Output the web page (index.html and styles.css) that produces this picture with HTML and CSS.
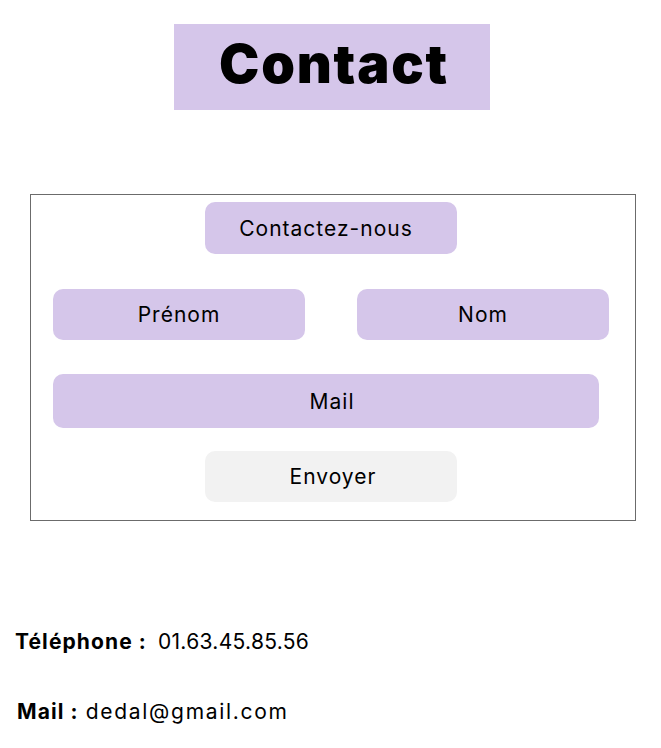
FILE: index.html
```html
<!DOCTYPE html>
<html lang="fr">
<head>
<meta charset="utf-8">
<title>Contact</title>
<link rel="stylesheet" href="styles.css">
</head>
<body>
<header class="title-wrap">
  <h1 class="title">Contact</h1>
</header>
<form class="form-box">
  <div class="row row-head"><div class="pill pill-head">Contactez-nous</div></div>
  <div class="row row-names">
    <div class="pill pill-half">Prénom</div>
    <div class="pill pill-half">Nom</div>
  </div>
  <div class="row row-mail"><div class="pill pill-mail">Mail</div></div>
  <div class="row row-send"><div class="pill pill-send">Envoyer</div></div>
</form>
<section class="info">
  <p class="info-line info-tel"><strong>Téléphone :</strong><span class="num">01.63.45.85.56</span></p>
  <p class="info-line info-mail"><strong>Mail :</strong><span class="addr">dedal@gmail.com</span></p>
</section>
</body>
</html>
```
FILE: styles.css
```css
* { box-sizing: border-box; }
html, body { margin: 0; padding: 0; background: #fff; }
body {
  width: 661px;
  font-family: Inter, "Open Sans", "DejaVu Sans", sans-serif;
  color: #000;
}
.title-wrap {
  margin: 24px 0 0 174px;
  width: 316px;
  height: 86px;
  background: #d5c6ea;
  display: flex;
  align-items: center;
  justify-content: center;
}
.title {
  margin: 0;
  font-family: Inter, sans-serif;
  font-weight: 900;
  font-size: 54px;
  letter-spacing: 1.8px;
  line-height: 1;
  padding-bottom: 6px;
  padding-left: 4px;
}
.form-box {
  margin: 84px 0 0 30px;
  width: 606px;
  height: 327px;
  border: 1px solid #6b6b6b;
  padding: 7px 0 0 22px;
  display: flex;
  flex-direction: column;
}
.row { display: flex; }
.pill {
  background: #d5c6ea;
  border-radius: 10px;
  display: flex;
  align-items: center;
  justify-content: center;
  font-size: 21px;
  font-weight: 400;
  letter-spacing: 1px;
}
.pill-head { margin-left: 152px; width: 252px; height: 52px; padding-right: 10px; }
.row-names { margin-top: 35px; gap: 52px; }
.pill-half { width: 252px; height: 51px; }
.row-mail { margin-top: 34px; }
.pill-mail { width: 546px; height: 54px; padding-left: 12px; }
.row-send { margin-top: 23px; }
.pill-send { margin-left: 152px; width: 252px; height: 51px; background: #f2f2f2; padding-left: 4px; }
.info-line {
  margin: 0;
  font-size: 21px;
  display: flex;
  align-items: baseline;
}
.info-line strong { font-weight: 700; letter-spacing: 1.1px; }
.num { letter-spacing: 0.3px; }
.addr { letter-spacing: 1.7px; }
.info-tel { margin-top: 108px; padding-left: 15px; gap: 11px; }
.info-mail { margin-top: 45px; padding-left: 17px; gap: 7px; }
```
